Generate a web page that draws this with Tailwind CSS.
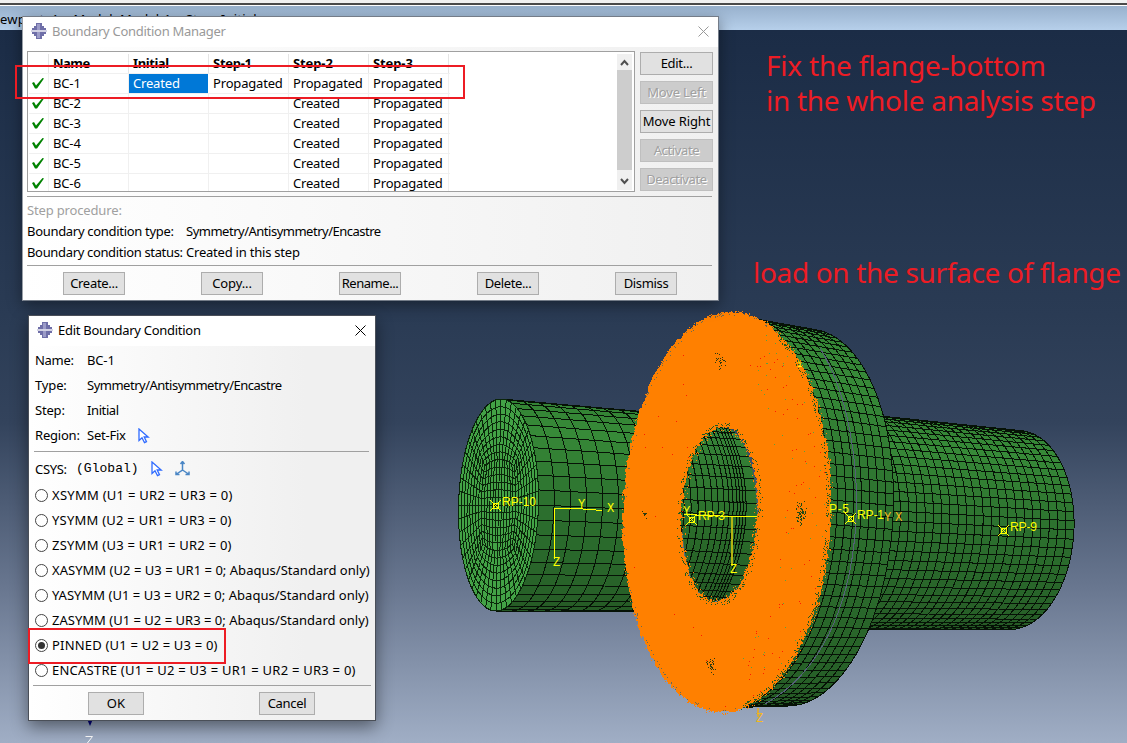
<!DOCTYPE html>
<html lang="en">
<head>
<meta charset="utf-8">
<title>Boundary Condition Manager</title>
<script src="https://cdn.jsdelivr.net/npm/@tailwindcss/browser@4"></script>
</head>
<body class="overflow-hidden">
<div class="relative w-[1127px] h-[743px] overflow-hidden flex flex-col text-[13px] leading-5 text-black font-['Noto_Sans',sans-serif] whitespace-pre">

  <header class="h-[30px] shrink-0 flex flex-col">
    <div class="h-[3px] bg-[#f0f0f0]"></div>
    <div class="h-[2px] bg-[#4a4a4a]"></div>
    <div class="h-px bg-white"></div>
    <div class="h-6 bg-linear-to-b from-[#98b1cd] to-[#b6cfea] flex items-center"><span data-w="256" class="mt-[2px]">ewport: 1    Model: Model-1    Step: Initial</span></div>
  </header>
  <main class="flex-1 bg-[linear-gradient(to_bottom,#1b2c46_0%,#2a3b54_40%,#33435c_55%,#68768f_78%,#a0aec5_100%)]"></main>

  <svg id="scene" class="absolute left-0 top-0" width="1127" height="743" viewBox="0 0 1127 743">
    <defs>
      <clipPath id="bore"><path d="M722 427C743 427 757 466 757 516C757 565 738 601 715 601C694 601 682 565 682 512C682 463 700 427 722 427Z"/></clipPath>
      <linearGradient id="boreFill" x1="0" y1="0" x2="0" y2="1"><stop offset="0" stop-color="#37873a"/><stop offset=".5" stop-color="#2c702c"/><stop offset="1" stop-color="#255a25"/></linearGradient>
    </defs>
    <g id="mesh" shape-rendering="crispEdges"></g>
    <g id="marks" stroke="#ff0" fill="none" stroke-width="1" shape-rendering="crispEdges"></g>
    <g fill="#ff0" font-family="Liberation Sans" font-size="12">
      <text x="502" y="505.500" textLength="34">RP-10</text>
      <text x="698" y="519.500" textLength="27">RP-3</text>
      <text x="829" y="513" textLength="20">P-5</text>
      <text x="857" y="518.500" textLength="27">RP-1</text>
      <text x="1010" y="530.500" textLength="27">RP-9</text>
    </g>
    <g fill="#ff0" font-family="Liberation Mono" font-size="12">
      <text x="578" y="508">Y</text><text x="607" y="512">X</text><text x="553" y="566">Z</text>
      <text x="683" y="515">Y</text><text x="730" y="573">Z</text>
      <text x="797" y="367" font-size="9">1</text>
      <g fill="#f5b81c"><text x="884" y="521">Y</text><text x="895" y="521">X</text><text x="756" y="722">Z</text></g>
    </g>
    <path d="M87 719h6l-3 7z" fill="#00007c"/>
    <path d="M85.500 736.500h7l-7 9" fill="none" stroke="#fff"/>
  </svg>

  <div class="absolute left-[766px] top-[48px] text-[28px] leading-[35px] text-[#ed1c24] flex flex-col items-start"><span data-w="279" data-font="28px Noto Sans">Fix the flange-bottom</span><span data-w="329" data-font="28px Noto Sans">in the whole analysis step</span></div>
  <div class="absolute left-[753px] top-[255px] text-[28px] leading-[35px] text-[#ed1c24]"><span data-w="367" data-font="28px Noto Sans">load on the surface of flange</span></div>

  <!-- Boundary Condition Manager -->
  <section class="absolute left-[22px] top-[16px] w-[697px] h-[285px] border border-[#747c88] border-l-[#9aa0a8] shadow-[0_4px_14px_rgba(0,0,0,0.4)] bg-linear-to-r from-white to-[#f0f0f0] flex flex-col pl-px">
    <div class="h-[30px] shrink-0 bg-white flex items-center pl-[8px] pr-[9px] -ml-px pb-[2px] text-[#999]">
      <svg width="16" height="16" viewBox="0 0 16 16" class="mr-[5px] shrink-0"><path d="M5 0h6v3h2v2h2v2H1V5h2V3h2zM1 9h14v2h-2v2h-2v3H5v-3H3v-2H1z" fill="#6f6fa8"/><path d="M6 1h3v6H6zM6 9h3v6H6z" fill="#9c9cc8"/><path d="M0 7h16v2H0z" fill="#d2d2e4"/></svg>
      <span data-w="173">Boundary Condition Manager</span>
      <svg width="11" height="11" class="ml-auto" stroke="#999" fill="none"><path d="M.5.5l10 10M10.500.5l-10 10"/></svg>
    </div>
    <div class="flex pl-[3px] pt-[4px] h-[148px] shrink-0">
      <div class="w-[608px] h-[141px] border border-[#a0a0a0] bg-white flex justify-between pt-[2px] pl-px overflow-hidden">
        <div id="table" class="flex flex-col w-[421px]"></div>
        <div class="w-[15px] mr-[2px] mb-px bg-[#f0f0f0] flex flex-col">
          <svg width="15" height="16" fill="none" stroke="#505050" stroke-width="2"><path d="M4 11l3.500-4 3.500 4"/></svg>
          <div class="h-[100px] bg-[#cdcdcd]"></div>
          <svg width="15" height="20" fill="none" stroke="#505050" stroke-width="2"><path d="M4 9l3.500 4 3.500-4"/></svg>
        </div>
      </div>
      <div class="flex flex-col gap-[6px] ml-[5px] pt-px">
        <div class="w-[73px] h-[23px] border border-[#adadad] bg-[#e1e1e1] flex items-center justify-center pb-[2px]"><span data-w="31">Edit...</span></div>
        <div class="w-[73px] h-[23px] border border-[#bfbfbf] bg-[#ccc] flex items-center justify-center pb-[2px] text-[#a0a0a0] [text-shadow:1px_1px_0_#fff]"><span data-w="58">Move Left</span></div>
        <div class="w-[73px] h-[23px] border border-[#adadad] bg-[#e1e1e1] flex items-center justify-center pb-[2px]"><span data-w="67">Move Right</span></div>
        <div class="w-[73px] h-[23px] border border-[#bfbfbf] bg-[#ccc] flex items-center justify-center pb-[2px] text-[#a0a0a0] [text-shadow:1px_1px_0_#fff]"><span data-w="45">Activate</span></div>
        <div class="w-[73px] h-[23px] border border-[#bfbfbf] bg-[#ccc] flex items-center justify-center pb-[2px] text-[#a0a0a0] [text-shadow:1px_1px_0_#fff]"><span data-w="60">Deactivate</span></div>
      </div>
    </div>
    <div class="mx-[3px] mt-px w-[685px] border-t border-[#a0a0a0]"></div>
    <div class="h-[68px] shrink-0 pl-[3px] pt-[3px] flex flex-col gap-px">
      <div class="text-[#a0a0a0]"><span data-w="94">Step procedure:</span></div>
      <div class="flex"><div class="w-[159px]"><span data-w="146">Boundary condition type:</span></div><span data-w="194">Symmetry/Antisymmetry/Encastre</span></div>
      <div class="flex"><div class="w-[159px]"><span data-w="155">Boundary condition status:</span></div><span data-w="113">Created in this step</span></div>
    </div>
    <div class="mx-[3px] w-[685px] border-t border-[#a0a0a0]"></div>
    <div class="flex gap-[76px] pl-[39px] pt-[6px]">
      <div class="w-[62px] h-[23px] border border-[#adadad] bg-[#e1e1e1] flex items-center justify-center pb-[2px]"><span data-w="47">Create...</span></div>
      <div class="w-[62px] h-[23px] border border-[#adadad] bg-[#e1e1e1] flex items-center justify-center pb-[2px]"><span data-w="39">Copy...</span></div>
      <div class="w-[62px] h-[23px] border border-[#adadad] bg-[#e1e1e1] flex items-center justify-center pb-[2px]"><span data-w="56">Rename...</span></div>
      <div class="w-[62px] h-[23px] border border-[#adadad] bg-[#e1e1e1] flex items-center justify-center pb-[2px]"><span data-w="46">Delete...</span></div>
      <div class="w-[62px] h-[23px] border border-[#adadad] bg-[#e1e1e1] flex items-center justify-center pb-[2px]"><span data-w="44">Dismiss</span></div>
    </div>
  </section>

  <!-- Edit Boundary Condition -->
  <section class="absolute left-[28px] top-[315px] w-[348px] h-[406px] border border-[#4a4f58] shadow-[0_6px_16px_rgba(0,0,0,0.45)] bg-linear-to-r from-white to-[#f0f0f0] to-80% flex flex-col">
    <div class="h-[30px] shrink-0 bg-white flex items-center pl-[8px] pr-[9px] pb-[2px]">
      <svg width="16" height="16" viewBox="0 0 16 16" class="mr-[5px] shrink-0"><path d="M5 0h6v3h2v2h2v2H1V5h2V3h2zM1 9h14v2h-2v2h-2v3H5v-3H3v-2H1z" fill="#6f6fa8"/><path d="M6 1h3v6H6zM6 9h3v6H6z" fill="#9c9cc8"/><path d="M0 7h16v2H0z" fill="#d2d2e4"/></svg>
      <span data-w="142">Edit Boundary Condition</span>
      <svg width="11" height="11" class="ml-auto" stroke="#000" fill="none"><path d="M.5.5l10 10M10.500.5l-10 10"/></svg>
    </div>
    <div class="h-[105px] shrink-0 pl-[6px] pt-[4px] flex flex-col gap-[5px]">
      <div class="flex"><div class="w-[52px]"><span data-w="38">Name:</span></div><span data-w="27">BC-1</span></div>
      <div class="flex"><div class="w-[52px]"><span data-w="31">Type:</span></div><span data-w="194">Symmetry/Antisymmetry/Encastre</span></div>
      <div class="flex"><div class="w-[52px]"><span data-w="29">Step:</span></div><span data-w="31">Initial</span></div>
      <div class="flex items-center"><div class="w-[52px]"><span data-w="44">Region:</span></div><span data-w="38">Set-Fix</span>
        <svg width="12" height="16" class="ml-[12px] mt-px" fill="#fff" stroke="#2f6bff" stroke-width="1.300"><path d="M1 1v11.500l3-2.800 2.500 5 2-1-2.300-4.700h4z"/></svg></div>
    </div>
    <div class="ml-[5px] w-[335px] border-t border-[#a0a0a0]"></div>
    <div class="h-[31px] shrink-0 flex items-center pl-[6px] pt-[2px]">
      <div class="w-[41px]"><span data-w="31">CSYS:</span></div>
      <span class="font-['Liberation_Mono',monospace]" data-w="62" data-font="13px Liberation Mono">(Global)</span>
      <svg width="12" height="16" class="ml-[12px] mt-px" fill="#fff" stroke="#2f6bff" stroke-width="1.300"><path d="M1 1v11.500l3-2.800 2.500 5 2-1-2.300-4.700h4z"/></svg>
      <svg width="15" height="15" class="ml-[12px]" fill="none" stroke="#4a86c5" stroke-width="1.500"><path d="M7.500 1v8L1.500 13M7.500 9l6 4M5.500 3l2-2.500 2 2.500M1 10.500V13.500h3.500M14 10.500V13.500h-3.500"/></svg>
    </div>
    <div id="options" class="h-[200px] shrink-0 flex flex-col pl-[6px]"></div>
    <div class="ml-[4px] mt-[2px] w-[338px] border-t border-[#a0a0a0]"></div>
    <div class="flex pl-[59px] pt-[6px] gap-[115px]">
      <div class="w-[56px] h-[23px] border border-[#adadad] bg-[#e1e1e1] flex items-center justify-center pb-[2px]"><span data-w="18">OK</span></div>
      <div class="w-[56px] h-[23px] border border-[#adadad] bg-[#e1e1e1] flex items-center justify-center pb-[2px]"><span data-w="38">Cancel</span></div>
    </div>
  </section>

  <!-- highlight frames -->
  <div class="absolute left-[15px] top-[65px] w-[450px] h-[34px] border-2 border-[#ed1c24]"></div>
  <div class="absolute left-[28px] top-[628px] w-[198px] h-[36px] border-2 border-[#ed1c24]"></div>
</div>

<script>
// Table rows
const P = ['Propagated', 69], C = ['Created', 46], E = ['', 0];
const rows = [['BC-1', C, P, P, P], ...[2,3,4,5,6].map(n => ['BC-' + n, E, E, C, P])];
const span = ([t, w], cls = '', font = '13px Noto Sans') => t ? `<span class="${cls}" data-w="${w}" data-font="${font}">${t}</span>` : '';
let html = '<div class="flex h-5 shrink-0 font-bold leading-[19px] border-b border-[#f0f0f0]"><div class="w-5 border-r border-[#e5e5e5]"></div>' +
  [['Name',36],['Initial',35],['Step-1',38],['Step-2',39],['Step-3',39]].map(c => `<div class="w-20 pl-1 border-r border-[#e5e5e5]">${span(c, '', 'bold 13px Noto Sans')}</div>`).join('') + '</div>';
rows.forEach((r, i) => {
  html += '<div class="flex h-5 shrink-0 border-b border-[#f0f0f0] leading-[19px]"><div class="w-5 border-r border-[#f0f0f0] flex items-center justify-center pr-px"><svg width="12" height="11"><path d="M0 5l2-1 2 3.500L10.500 0 12 .5 5 10.500H3z" fill="#008200"/></svg></div>' +
    `<div class="w-20 pl-1 border-r border-[#f0f0f0]">${span([r[0], 27])}</div>` +
    r.slice(1).map((c, j) => i === 0 && j === 0
      ? `<div class="w-20 pl-1 border-r border-white bg-[#0078d7] text-white">${span(c)}</div>`
      : `<div class="w-20 pl-1 border-r border-[#f0f0f0]">${span(c)}</div>`).join('') + '</div>';
});
document.getElementById('table').innerHTML = html;

// Radio options
document.getElementById('options').innerHTML = [
  ['XSYMM (U1 = UR2 = UR3 = 0)', 180], ['YSYMM (U2 = UR1 = UR3 = 0)', 179], ['ZSYMM (U3 = UR1 = UR2 = 0)', 179],
  ['XASYMM (U2 = U3 = UR1 = 0; Abaqus/Standard only)', 317], ['YASYMM (U1 = U3 = UR2 = 0; Abaqus/Standard only)', 316],
  ['ZASYMM (U1 = U2 = UR3 = 0; Abaqus/Standard only)', 316], ['PINNED (U1 = U2 = U3 = 0)', 165],
  ['ENCASTRE (U1 = U2 = U3 = UR1 = UR2 = UR3 = 0)', 303]
].map((o, i) => `<div class="flex items-center h-[25px] shrink-0"><svg width="13" height="13" class="mr-[4px]"><circle cx="6.500" cy="6.500" r="6" fill="#fff" stroke="#444"/>${i === 6 ? '<circle cx="6.500" cy="6.500" r="3.500" fill="#333"/>' : ''}</svg>${span(o, 'pb-[2px]')}</div>`).join('');

// Spread each label over its nominal width; the canvas gives its natural width in the given font
const ctx = document.createElement('canvas').getContext('2d');
document.querySelectorAll('[data-w]').forEach(el => {
  const [, size, family] = (el.dataset.font || '13px Noto Sans').match(/^(.*?px) (.*)$/);
  ctx.font = `${size} "${family}"`;
  el.style.letterSpacing = ((+el.dataset.w + .7 - ctx.measureText(el.textContent).width) / el.textContent.length).toFixed(3) + 'px';
});

// Meshed part
let seed = 7;
const rnd = () => (seed = (seed * 16807) % 2147483647) / 2147483647;
const f = v => v.toFixed(1);
const lerp = (a, b, t) => a + (b - a) * t;
const mix = (a, b, t) => 'rgb(' + a.map((v, i) => Math.round(lerp(v, b[i], t))).join() + ')';
const shade = th => { const t = (th + Math.PI / 2) / Math.PI;
  return t < .25 ? mix([50,128,50],[55,138,56], t / .25) : t < .5 ? mix([55,138,56],[44,112,46], (t - .25) / .25) : mix([44,112,46],[36,86,36], (t - .5) / .5); };
// section: [cx, cy, rx, ry, tilt]
const pt = (s, th) => [s[0] + s[2] * Math.cos(th) - s[4] * Math.sin(th), s[1] + s[3] * Math.sin(th)];
function cylinder(a, b, nS, nT) {
  let o = '';
  const sec = i => a.map((v, k) => lerp(v, b[k], i / nS));
  for (let j = 0; j < nT; j++) {
    const t0 = -Math.PI / 2 + Math.PI * j / nT, t1 = t0 + Math.PI / nT;
    for (let i = 0; i < nS; i++) {
      const q = [pt(sec(i), t0), pt(sec(i + 1), t0), pt(sec(i + 1), t1), pt(sec(i), t1)];
      o += `<path d="M${q.map(p => f(p[0]) + ' ' + f(p[1])).join('L')}Z" fill="${shade((t0 + t1) / 2)}"/>`;
    }
  }
  return `<g stroke="#061206" stroke-width="1">${o}</g>`;
}
let g = cylinder([838,521,54,109,4], [1014,530,60,99.5,4], 22, 34);
g += cylinder([727,512,102,196,8], [798,517.500,95,188.500,10], 8, 50);
g += '<path d="M820 348C872 430 880 640 765 704" fill="none" stroke="#55607a"/>';
g += cylinder([498.500,505,39.500,106,2.500], [645,511.500,38,99.500,2.500], 9, 22);

// End face: square core grid blended outwards into rings
const N = 12, R = 8;
const toFace = (u, v) => [498.5 + 40 * u - 2.5 * v, 505 + 106 * v];
const line = pts => 'M' + pts.map(p => { const q = toFace(p[0], p[1]); return f(q[0]) + ' ' + f(q[1]); }).join('L');
const core = (a, b) => [a * .37 * (1 + .16 * (1 - b * b)), b * .37 * (1 + .16 * (1 - a * a))];
const edge = k => { const s = Math.floor(k / N) % 4, t = -1 + 2 * (k % N) / N;
  return [[t, -1], [1, t], [-t, 1], [-1, -t]][s]; };
const outer = k => { const th = -Math.PI * .75 + k * Math.PI / (2 * N); return [Math.cos(th), Math.sin(th)]; };
const at = (k, r) => { const c = core(...edge(k)), o = outer(k); return [lerp(c[0], o[0], r), lerp(c[1], o[1], r)]; };
let d = '';
const range = n => [...Array(n + 1).keys()];
for (let k = 0; k < 4 * N; k++) d += line([at(k, 0), at(k, 1)]);
for (let r = 0; r <= R; r++) d += line(range(4 * N).map(k => at(k, r / R)));
range(N).forEach(i => { const a = -1 + 2 * i / N;
  d += line(range(N).map(j => core(a, -1 + 2 * j / N))) + line(range(N).map(j => core(-1 + 2 * j / N, a))); });
g += `<path d="${line(range(96).map(k => [Math.cos(k * Math.PI / 48), Math.sin(k * Math.PI / 48)]))}Z" fill="#43a246" stroke="#061206"/><path d="${d}" fill="none" stroke="#0a260a"/>`;

// Bore interior
let b = '';
[757,754,751,748,744,740,735,729,723,716,709,702,695,688].forEach(x => b += `M${x - 32} 420Q${x + 14} 514 ${x - 40} 608`);
for (let k = -10; k <= 10; k++) { const y = 514 + 90 * Math.sin(k / 10 * 1.45); b += `M676 ${f(y - 2)}L762 ${f(y + 3)}`; }
g += `<g clip-path="url(#bore)"><rect x="676" y="424" width="86" height="180" fill="url(#boreFill)"/><path d="${b}" fill="none" stroke="#061206"/></g>`;

// Loaded face: ragged annulus
const O = [727, 512, 104, 200, 5], H = [719.500, 514, 38, 87, 3.500];
const loop = (s, n, j) => { let o = ''; for (let k = 0; k < n; k++) { const th = k * 2 * Math.PI / n, m = (rnd() - .5) * j;
  const p = pt([s[0], s[1], s[2] + m, s[3] + m, s[4]], th); o += (k ? 'L' : 'M') + f(p[0]) + ' ' + f(p[1]); } return o + 'Z'; };
g += `<path fill-rule="evenodd" fill="#ff8000" d="${loop(O, 420, 2.5)}${loop(H, 240, 3)}"/>`;
const dots = (n, color, fn) => { let o = ''; for (let k = 0; k < n; k++) { const p = fn(); o += `M${Math.round(p[0])} ${Math.round(p[1])}h1v1h-1z`; } g += `<path d="${o}" fill="${color}"/>`; };
const rim = (s, lo, hi, a0, a1) => () => { const m = lerp(lo, hi, rnd()); return pt([s[0], s[1], s[2] + m, s[3] + m, s[4]], lerp(a0, a1, rnd())); };
dots(380, '#1f5a20', rim(O, -5, 0, -1.1, 1.4));
dots(110, '#6b6a50', rim(O, -3, 0, 1.4, 5.2));
dots(220, '#ff8000', rim(O, 0, 2, 0, 6.283));
dots(260, '#1f5a20', rim(H, 0, 5, 0, 6.283));
dots(150, '#ff8000', rim(H, -4, 0, 0, 6.283));
dots(70, '#ff1a00', rim(O, -50, -4, -1.2, 1.3));
dots(50, '#5aa040', rim(O, -55, -4, -1.2, 1.3));
dots(20, '#ff1a00', rim(O, -60, -4, 1.4, 5.2));
const blob = (x, y, w, h) => () => [x + (rnd() + rnd() - 1) * w, y + (rnd() + rnd() - 1) * h];
dots(26, '#2a3a10', blob(720, 361, 6, 10));
dots(75, '#1f4a14', blob(800, 513, 6, 13));
dots(34, '#2a3a10', blob(711, 665, 6, 10));
dots(9, '#2a3a10', blob(644, 513, 4, 8));
document.getElementById('mesh').innerHTML = g;

// Reference points and axes
const star = (x, y) => `M${x - 5} ${y - 5}l11 11M${x + 6} ${y - 5}l-11 11M${x - 2}.500 ${y - 2}.500h5v5h-5z`;
document.getElementById('marks').innerHTML =
  `<path d="${star(495,505)}${star(691,519)}${star(850,518)}${star(1003,530)}"/>` +
  '<path d="M555 508.500h22l25 2M554.500 508v51"/><path d="M684 514.500l48 2h25"/><path d="M732 517v49" stroke="#b5b512" stroke-width="2"/><path d="M757.500 708v9" stroke="#d8a840" stroke-width="2"/>';
</script>
</body>
</html>
